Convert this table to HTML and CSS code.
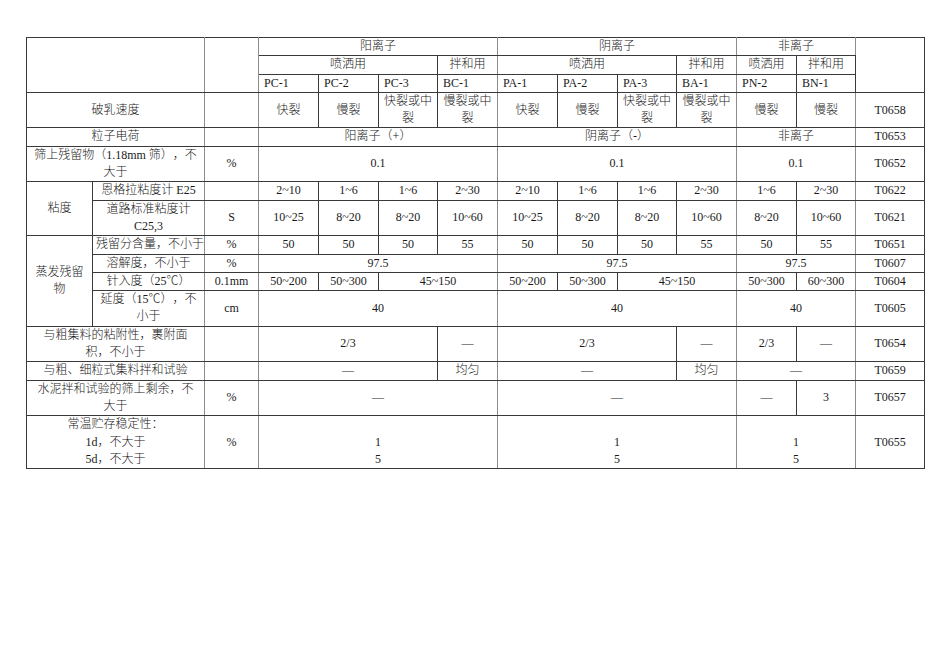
FILE: index.html
```html
<!DOCTYPE html>
<html lang="zh-CN">
<head>
<meta charset="utf-8">
<title>乳化沥青技术要求</title>
<link rel="stylesheet" href="styles.css">
</head>
<body>
<table class="spec">
  <colgroup>
    <col class="c-a"><col class="c-b"><col class="c-u">
    <col class="c-v"><col class="c-v"><col class="c-n"><col class="c-v">
    <col class="c-v"><col class="c-v"><col class="c-n"><col class="c-v">
    <col class="c-v"><col class="c-n">
    <col class="c-t">
  </colgroup>
  <tbody>
    <tr>
      <td colspan="2" rowspan="3" class="gr"></td>
      <td rowspan="3" class="gr"></td>
      <td colspan="4" class="gr">阳离子</td>
      <td colspan="4" class="gr">阴离子</td>
      <td colspan="2" class="gr">非离子</td>
      <td rowspan="3"></td>
    </tr>
    <tr>
      <td colspan="3">喷洒用</td>
      <td class="gr">拌和用</td>
      <td colspan="3">喷洒用</td>
      <td class="gr">拌和用</td>
      <td>喷洒用</td>
      <td class="gr">拌和用</td>
    </tr>
    <tr>
      <td class="l">PC-1</td>
      <td class="l">PC-2</td>
      <td class="l">PC-3</td>
      <td class="l gr">BC-1</td>
      <td class="l">PA-1</td>
      <td class="l">PA-2</td>
      <td class="l">PA-3</td>
      <td class="l gr">BA-1</td>
      <td class="l">PN-2</td>
      <td class="l gr">BN-1</td>
    </tr>
    <tr>
      <td colspan="2" class="gr">破乳速度</td>
      <td class="gr"></td>
      <td>快裂</td>
      <td>慢裂</td>
      <td>快裂或中<br>裂</td>
      <td class="gr">慢裂或中<br>裂</td>
      <td>快裂</td>
      <td>慢裂</td>
      <td>快裂或中<br>裂</td>
      <td class="gr">慢裂或中<br>裂</td>
      <td>慢裂</td>
      <td class="gr">慢裂</td>
      <td>T0658</td>
    </tr>
    <tr class="gt">
      <td colspan="2" class="gr">粒子电荷</td>
      <td class="gr"></td>
      <td colspan="4" class="gr">阳离子（+）</td>
      <td colspan="4" class="gr">阴离子（-）</td>
      <td colspan="2" class="gr">非离子</td>
      <td>T0653</td>
    </tr>
    <tr>
      <td colspan="2" class="gr">筛上残留物（1.18mm 筛），不<br>大于</td>
      <td class="gr">%</td>
      <td colspan="4" class="gr">0.1</td>
      <td colspan="4" class="gr">0.1</td>
      <td colspan="2" class="gr">0.1</td>
      <td>T0652</td>
    </tr>
    <tr>
      <td rowspan="2">粘度</td>
      <td class="gr">恩格拉粘度计 E25</td>
      <td class="gr"></td>
      <td>2~10</td>
      <td>1~6</td>
      <td>1~6</td>
      <td class="gr">2~30</td>
      <td>2~10</td>
      <td>1~6</td>
      <td>1~6</td>
      <td class="gr">2~30</td>
      <td>1~6</td>
      <td class="gr">2~30</td>
      <td>T0622</td>
    </tr>
    <tr>
      <td class="gr">道路标准粘度计<br>C25,3</td>
      <td class="gr">S</td>
      <td>10~25</td>
      <td>8~20</td>
      <td>8~20</td>
      <td class="gr">10~60</td>
      <td>10~25</td>
      <td>8~20</td>
      <td>8~20</td>
      <td class="gr">10~60</td>
      <td>8~20</td>
      <td class="gr">10~60</td>
      <td>T0621</td>
    </tr>
    <tr class="gt">
      <td rowspan="4">蒸发残留<br>物</td>
      <td class="gr">残留分含量，不小于</td>
      <td class="gr">%</td>
      <td>50</td>
      <td>50</td>
      <td>50</td>
      <td class="gr">55</td>
      <td>50</td>
      <td>50</td>
      <td>50</td>
      <td class="gr">55</td>
      <td>50</td>
      <td class="gr">55</td>
      <td>T0651</td>
    </tr>
    <tr>
      <td class="gr">溶解度，不小于</td>
      <td class="gr">%</td>
      <td colspan="4" class="gr">97.5</td>
      <td colspan="4" class="gr">97.5</td>
      <td colspan="2" class="gr">97.5</td>
      <td>T0607</td>
    </tr>
    <tr>
      <td class="gr">针入度（25℃）</td>
      <td class="gr">0.1mm</td>
      <td>50~200</td>
      <td>50~300</td>
      <td colspan="2" class="gr">45~150</td>
      <td>50~200</td>
      <td>50~300</td>
      <td colspan="2" class="gr">45~150</td>
      <td>50~300</td>
      <td class="gr">60~300</td>
      <td>T0604</td>
    </tr>
    <tr>
      <td class="gr">延度（15℃），不<br>小于</td>
      <td class="gr">cm</td>
      <td colspan="4" class="gr">40</td>
      <td colspan="4" class="gr">40</td>
      <td colspan="2" class="gr">40</td>
      <td>T0605</td>
    </tr>
    <tr>
      <td colspan="2" class="gr">与粗集料的粘附性，裹附面<br>积，不小于</td>
      <td class="gr"></td>
      <td colspan="3">2/3</td>
      <td class="gr">—</td>
      <td colspan="3">2/3</td>
      <td class="gr">—</td>
      <td>2/3</td>
      <td class="gr">—</td>
      <td>T0654</td>
    </tr>
    <tr class="gt">
      <td colspan="2" class="gr">与粗、细粒式集料拌和试验</td>
      <td class="gr"></td>
      <td colspan="3">—</td>
      <td class="gr">均匀</td>
      <td colspan="3">—</td>
      <td class="gr">均匀</td>
      <td colspan="2" class="gr">—</td>
      <td>T0659</td>
    </tr>
    <tr>
      <td colspan="2" class="gr">水泥拌和试验的筛上剩余，不<br>大于</td>
      <td class="gr">%</td>
      <td colspan="4" class="gr">—</td>
      <td colspan="4" class="gr">—</td>
      <td>—</td>
      <td class="gr">3</td>
      <td>T0657</td>
    </tr>
    <tr class="gt">
      <td colspan="2" class="gr">常温贮存稳定性：<br>1d，不大于<br>5d，不大于</td>
      <td class="gr">%</td>
      <td colspan="4" class="gr low">1<br>5</td>
      <td colspan="4" class="gr low">1<br>5</td>
      <td colspan="2" class="gr low">1<br>5</td>
      <td>T0655</td>
    </tr>
  </tbody>
</table>
</body>
</html>
```

FILE: styles.css
```css
html, body {
  margin: 0;
  padding: 0;
  background: #ffffff;
}

.spec {
  margin: 37px 0 0 26px;
  width: 898px;
  table-layout: fixed;
  border-collapse: collapse;
  border: 1px solid #8c8c8c;
  font-family: "Liberation Serif", "Noto Sans CJK SC", serif;
  font-size: 12px;
  font-weight: 300;
  line-height: 17.3px;
  color: #1a1a1a;
  text-spacing-trim: space-all;
}

.c-a { width: 66px; }
.c-b { width: 112px; }
.c-u { width: 54px; }
.c-v { width: 60px; }
.c-n { width: 59px; }
.c-t { width: 69px; }

.spec td {
  border: 1px solid #3a3a3a;
  padding: 0 3px;
  text-align: center;
  vertical-align: middle;
  white-space: nowrap;
  overflow: hidden;
}

.spec td.gr {
  border-right-color: #8c8c8c;
}

.spec tr.gt > td {
  border-top-color: #8c8c8c;
}

.spec td.l {
  text-align: left;
  padding-left: 5px;
}

.spec td.low {
  padding-top: 17.3px;
}
```
